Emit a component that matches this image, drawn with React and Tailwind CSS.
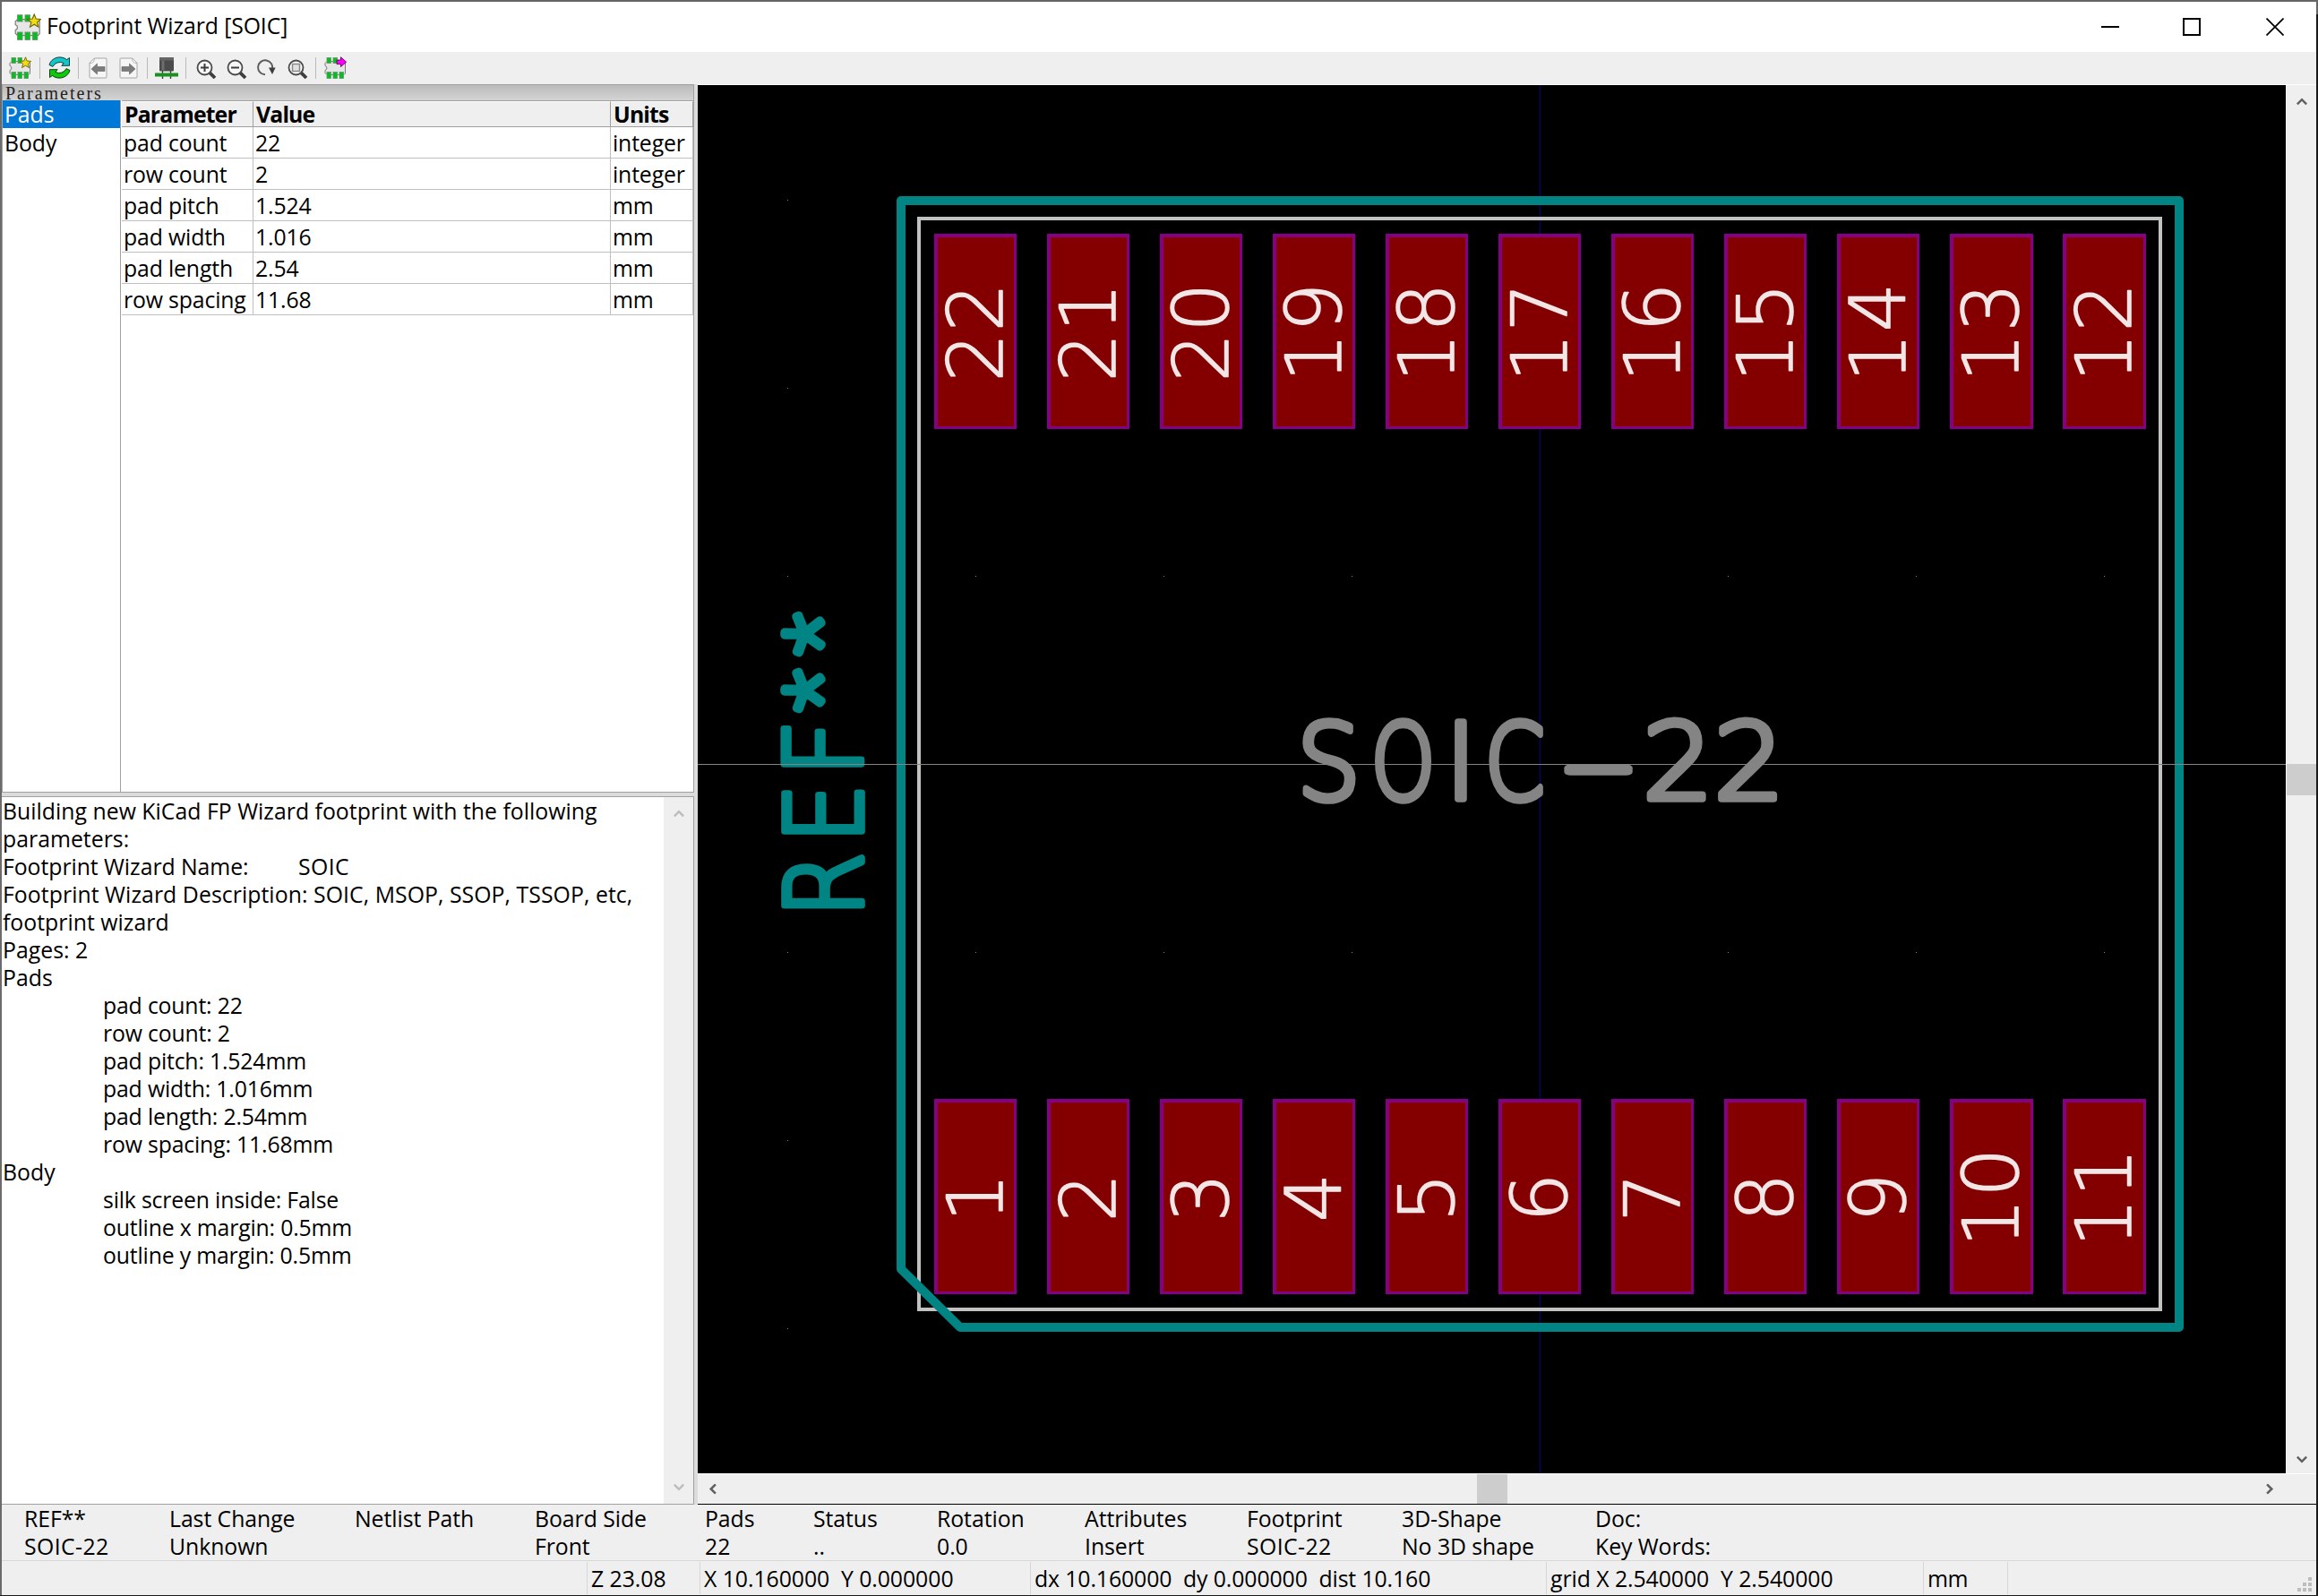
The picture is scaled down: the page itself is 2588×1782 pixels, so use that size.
import React from "react";

const params = [
  ["pad count", "22", "integer"],
  ["row count", "2", "integer"],
  ["pad pitch", "1.524", "mm"],
  ["pad width", "1.016", "mm"],
  ["pad length", "2.54", "mm"],
  ["row spacing", "11.68", "mm"],
];

const messages = [
  ["Building new KiCad FP Wizard footprint with the following", "plain"],
  ["parameters:", "plain"],
  ["Footprint Wizard Name:", "name"],
  ["Footprint Wizard Description: SOIC, MSOP, SSOP, TSSOP, etc,", "caps"],
  ["footprint wizard", "plain"],
  ["Pages: 2", "plain"],
  ["Pads", "plain"],
  ["pad count: 22", "indent"],
  ["row count: 2", "indent"],
  ["pad pitch: 1.524mm", "indent"],
  ["pad width: 1.016mm", "indent"],
  ["pad length: 2.54mm", "indent"],
  ["row spacing: 11.68mm", "indent"],
  ["Body", "plain"],
  ["silk screen inside: False", "indent"],
  ["outline x margin: 0.5mm", "indent"],
  ["outline y margin: 0.5mm", "indent"],
];

const messageStyles = {
  plain: "h-[31px] leading-[31px] whitespace-pre tracking-[0.02px]",
  caps: "h-[31px] leading-[31px] whitespace-pre tracking-[0.06px]",
  indent: "h-[31px] pl-28 leading-[31px] whitespace-pre tracking-[-0.17px]",
};

function FootprintBase() {
  return (
    <>
      <path d="M1 7.5 L3 5.5 H22 L23.5 7 V19 L22 20.5 H3 L1 18.5 V15.5 A2.6 2.6 0 0 0 1 10.5 Z" fill="#e6e6e6" stroke="#7d7d7d" strokeWidth="1" />
      {[3, 10, 17].map((x) => (
        <rect key={x} x={x} y="17.5" width="4.5" height="7" fill="#00c21c" stroke="#6f8f70" strokeWidth="0.8" />
      ))}
      {[3, 10].map((x) => (
        <rect key={x} x={x} y="1.5" width="4.5" height="6" fill="#00c21c" stroke="#6f8f70" strokeWidth="0.8" />
      ))}
    </>
  );
}

function WizardIcon({ className }) {
  return (
    <svg viewBox="0 0 25 25" className={className}>
      <FootprintBase />
      <path d="M18.5 0.8 L20.2 5 L24.6 5.4 L21.3 8.3 L22.4 12.6 L18.5 10.2 L14.6 12.6 L15.7 8.3 L12.4 5.4 L16.8 5 Z" fill="#f0dc10" stroke="#6b6200" strokeWidth="0.9" />
    </svg>
  );
}

function ExportIcon() {
  return (
    <svg viewBox="0 0 25 25" className="size-[25px]">
      <FootprintBase />
      <path d="M14 4 H18.5 V0.8 L24.6 6.2 L18.5 11.6 V8.6 H14 Z" fill="#f0f" stroke="#5b005b" strokeWidth="0.9" />
    </svg>
  );
}

function RefreshIcon() {
  return (
    <svg viewBox="0 0 25 25" className="size-[25px]">
      <path d="M1 9.5 A12 11 0 0 1 20.6 3.6 L23.5 1.5 V10.3 H14.8 L17.2 7.6 A8.5 8 0 0 0 5 11.4 Z" fill="#10c8c8" stroke="#173b3a" strokeWidth="1" />
      <path d="M24 15.5 A12 11 0 0 1 4.4 21.4 L1.5 23.5 V14.7 H10.2 L7.8 17.4 A8.5 8 0 0 0 20 13.6 Z" fill="#0ccb0c" stroke="#173b17" strokeWidth="1" />
    </svg>
  );
}

function PageArrow({ flip }) {
  return (
    <svg viewBox="0 0 21 24" className={flip ? "h-6 w-[21px] -scale-x-100" : "h-6 w-[21px]"}>
      <path d="M6.5 1 H19 Q20 1 20 2 V22 Q20 23 19 23 H2 Q1 23 1 22 V6.5 Z" fill="#f6f6f6" stroke="#a6a6a6" />
      <path d="M1 6.5 Q6.5 7 6.5 1 Z" fill="#fff" stroke="#a6a6a6" strokeWidth="0.8" />
      <path d="M3 13 L9.5 7 V10.5 H18 V15.5 H9.5 V19 Z" fill="#7c7c7c" stroke="#626262" strokeWidth="0.6" />
    </svg>
  );
}

function ChipIcon() {
  return (
    <svg viewBox="0 0 26 26" className="size-[26px]">
      <path d="M8.5 16 V25 M17.5 16 V25" stroke="#3c3c3c" strokeWidth="1.4" />
      <rect x="5" y="1" width="16" height="15.5" rx="1" fill="#4b4b4b" />
      <rect x="5" y="1" width="16" height="3.5" rx="1" fill="#656565" />
      <rect x="7.5" y="4.5" width="3" height="11" fill="#6d6d6d" />
      <rect x="0" y="18.5" width="26" height="4" fill="#1c8f22" />
    </svg>
  );
}

function Magnifier({ children }) {
  return (
    <svg viewBox="0 0 23 23" className="size-[23px]">
      <circle cx="9.5" cy="9.5" r="8" fill="#f8f8f8" stroke="#4a4a4a" strokeWidth="1.8" />
      <path d="M15.3 15.3 L21 21" stroke="#3d3d3d" strokeWidth="3.8" />
      {children}
    </svg>
  );
}

function ToolSeparator() {
  return <div className="h-6 w-px bg-[#b9b9b9]" />;
}

function Toolbar() {
  return (
    <div className="flex h-9 items-center bg-[#efefef] pb-px pl-2">
      <WizardIcon className="size-[25px]" />
      <div className="w-[9px]" />
      <ToolSeparator />
      <div className="w-[9px]" />
      <RefreshIcon />
      <div className="w-2" />
      <ToolSeparator />
      <div className="w-[11px]" />
      <PageArrow />
      <div className="w-[13px]" />
      <PageArrow flip />
      <div className="w-[10px]" />
      <ToolSeparator />
      <div className="w-2" />
      <ChipIcon />
      <div className="w-2" />
      <ToolSeparator />
      <div className="w-[11px]" />
      <div className="flex gap-[11px] pt-[3px]">
        <Magnifier>
          <path d="M5 9.5 H14 M9.5 5 V14" stroke="#3d3d3d" strokeWidth="2" />
        </Magnifier>
        <Magnifier>
          <path d="M5 9.5 H14" stroke="#3d3d3d" strokeWidth="2" />
        </Magnifier>
        <svg viewBox="0 0 23 23" className="size-[23px]">
          <path d="M9 17.3 A8 8 0 1 1 16.8 11.5" fill="none" stroke="#5b5b5b" strokeWidth="1.9" />
          <path d="M13 9.5 H20.6 L17 17 Z" fill="#3d3d3d" />
        </svg>
        <Magnifier>
          <rect x="5.5" y="5.5" width="8" height="8" fill="#e2e2e2" stroke="#8a8a8a" strokeWidth="1.5" />
        </Magnifier>
      </div>
      <div className="w-2" />
      <ToolSeparator />
      <div className="w-[9px]" />
      <ExportIcon />
    </div>
  );
}

function TitleBar() {
  return (
    <div className="flex h-14 items-center bg-white pl-[14px]">
      <WizardIcon className="size-[30px]" />
      <span className="ml-[6px] flex-1 pb-[3px] tracking-[-0.1px]">Footprint Wizard [SOIC]</span>
      <div className="flex items-center pr-9 pb-px">
        <div className="h-0.5 w-5 bg-black" />
        <div className="ml-[71px] size-5 border-2 border-black" />
        <svg viewBox="0 0 20 20" className="ml-[73px] size-5">
          <path d="M0.5 0.5 L19.5 19.5 M19.5 0.5 L0.5 19.5" stroke="#000" strokeWidth="1.7" />
        </svg>
      </div>
    </div>
  );
}

function Chevron({ className, color }) {
  return (
    <svg viewBox="0 0 12 9" className={className}>
      <path d="M0.8 7.4 L6 2.2 L11.2 7.4" fill="none" stroke={color} strokeWidth="2.5" />
    </svg>
  );
}

function ParameterPanel() {
  return (
    <div className="flex h-[791px] flex-col border border-[#a0a0a0] bg-white">
      <div className="h-[17px] bg-linear-to-b from-[#bababa] to-[#d4d4d4] pl-[3px] font-['Liberation_Serif',serif] text-[20px] leading-[18px] tracking-[2px] text-[#222]">
        Parameters
      </div>
      <div className="flex flex-1">
        <div className="w-[131px] shrink-0">
          <div className="h-[31px] bg-[#0078d7] pl-[2px] leading-[30px] text-white">Pads</div>
          <div className="h-[31px] pl-[2px] leading-[32px]">Body</div>
        </div>
        <div className="w-px bg-[#a0a0a0]" />
        <div className="ml-px flex-1">
          <div className="grid h-[30px] grid-cols-[147px_399px_1fr] border-t border-b border-[#a0a0a0] bg-[#efefef] leading-[26px] font-bold tracking-[-0.85px]">
            <div className="border-t border-r border-t-white border-r-[#a0a0a0] pl-[3px]">Parameter</div>
            <div className="border-t border-r border-t-white border-r-[#a0a0a0] pl-[3px]">Value</div>
            <div className="border-t border-r border-t-white border-r-[#a0a0a0] pl-[3px]">Units</div>
          </div>
          {params.map((row) => (
            <div key={row[0]} className="grid h-[35px] grid-cols-[147px_399px_1fr] border-b border-[#c0c0c0] leading-[34px] tracking-[-0.15px]">
              {row.map((cell, i) => (
                <div key={i} className="h-[34px] border-r border-[#c0c0c0] pl-[2px]">{cell}</div>
              ))}
            </div>
          ))}
        </div>
      </div>
    </div>
  );
}

function MessagePanel() {
  return (
    <div className="mt-1 flex flex-1 border border-l-0 border-[#a0a0a0] bg-white">
      <div className="flex-1 pl-px">
        {messages.map(([text, kind]) =>
          kind === "name" ? (
            <div key={text} className="flex h-[31px] leading-[31px]">
              <span className="w-[330px]">{text}</span>
              <span className="tracking-[0.4px]">SOIC</span>
            </div>
          ) : (
            <div key={text} className={messageStyles[kind]}>{text}</div>
          )
        )}
      </div>
      <div className="flex w-[33px] flex-col items-center justify-between bg-[#efefef] py-3.5">
        <Chevron className="h-[9px] w-3" color="#bdbdbd" />
        <Chevron className="h-[9px] w-3 rotate-180" color="#bdbdbd" />
      </div>
    </div>
  );
}

const dotColumns = [879, 1089, 1299, 1509, 1929, 2139, 2349];
const dotRows = [223, 433, 643, 1063, 1273, 1483];
const pads = Array.from({ length: 11 }, (_, i) => i);

function Pad({ index, y, label, cy }) {
  const x = 1043 + index * 126;
  const w = index > 8 ? 93 : 92;
  return (
    <g>
      <rect x={x} y={y} width={w} height="218" fill="#840084" />
      <rect x={x + 4} y={y + 4} width={w - 7} height="211" fill="#840000" />
      <text
        transform={`translate(${x + 75.6} ${cy}) rotate(-90)`}
        textAnchor="middle"
        fontFamily="'DejaVu Sans Light', 'DejaVu Sans', sans-serif"
        fontWeight="200"
        fontSize="86"
        letterSpacing="1.3"
        fill="#f2e6e6"
        stroke="#f2e6e6"
        strokeWidth="1.5"
        strokeLinejoin="round"
      >
        {label}
      </text>
    </g>
  );
}

const fit = { lengthAdjust: "spacingAndGlyphs" };

function FootprintCanvas() {
  return (
    <svg viewBox="779 95 1773 1550" className="block h-[1550px] w-[1773px] bg-black">
      {dotRows.map((y) => dotColumns.map((x) => <rect key={`${x}-${y}`} x={x} y={y} width="1" height="1" fill="#848484" />))}
      <rect x="1719" y="95" width="1" height="1550" fill="#000084" />
      <rect x="1026" y="244" width="1386" height="1218" fill="none" stroke="#c2c2c2" strokeWidth="4" />
      <path d="M1006 224 H2433 V1482 H1072 L1006 1417 Z" fill="none" stroke="#008484" strokeWidth="10" strokeLinejoin="round" />
      {pads.map((i) => (
        <Pad key={`t${i}`} index={i} y={261} label={String(22 - i)} cy={370.5} />
      ))}
      {pads.map((i) => (
        <Pad key={`b${i}`} index={i} y={1227} label={String(i + 1)} cy={1336.5} />
      ))}
      <text
        y="892.2"
        fontFamily="'DejaVu Sans Light', 'DejaVu Sans', sans-serif"
        fontWeight="200"
        fontSize="118.5"
        fill="#848484"
        stroke="#848484"
        strokeWidth="7.6"
        strokeLinejoin="round"
      >
        <tspan x="1448" textLength="71" {...fit}>S</tspan>
        <tspan x="1530.5" textLength="72" {...fit}>O</tspan>
        <tspan x="1613.6" textLength="35" {...fit}>I</tspan>
        <tspan x="1657.5" textLength="67.4" {...fit}>C</tspan>
        <tspan x="1742.5" textLength="84" {...fit}>-</tspan>
        <tspan x="1834" textLength="79" {...fit}>2</tspan>
        <tspan x="1913.5" textLength="79" {...fit}>2</tspan>
      </text>
      <text
        transform="translate(962.2 1020) rotate(-90)"
        fontFamily="'DejaVu Sans Light', 'DejaVu Sans', sans-serif"
        fontWeight="200"
        fontSize="118.5"
        fill="#008484"
        stroke="#008484"
        strokeWidth="7.6"
        strokeLinejoin="round"
      >
        <tspan x="-4" textLength="72" {...fit}>R</tspan>
        <tspan x="79" textLength="65.5" {...fit}>E</tspan>
        <tspan x="153.6" textLength="62" {...fit}>F</tspan>
        <tspan x="227" y="-11" fontFamily="Roboto" fontWeight="100" fontSize="105" strokeWidth="9.5">*</tspan>
        <tspan x="290" y="-11" fontFamily="Roboto" fontWeight="100" fontSize="105" strokeWidth="9.5">*</tspan>
      </text>
      <rect x="779" y="853" width="1773" height="1" fill="#848484" />
    </svg>
  );
}

function CanvasPanel() {
  return (
    <div className="flex flex-1 flex-col border-t border-t-white border-b border-b-black bg-[#efefef]">
      <div className="flex">
        <FootprintCanvas />
        <div className="flex w-[34px] flex-col items-center border-l border-[#f8f8f8] bg-[#efefef] pt-[14px] pb-[11px]">
          <Chevron className="h-[9px] w-3" color="#606060" />
          <div className="mt-[735px] h-[35px] w-[33px] bg-[#cdcdcd]" />
          <Chevron className="mt-auto h-[9px] w-3 rotate-180" color="#606060" />
        </div>
      </div>
      <div className="flex h-[34px] items-center border-t border-white pr-[46px] pl-[11px]">
        <Chevron className="h-[9px] w-3 -rotate-90" color="#606060" />
        <div className="ml-[847px] h-[33px] w-[34px] bg-[#cdcdcd]" />
        <Chevron className="ml-auto h-[9px] w-3 rotate-90" color="#606060" />
      </div>
    </div>
  );
}

function Info({ label, value, className }) {
  return (
    <div className={className}>
      <div className="h-[31px] whitespace-pre">{label}</div>
      <div className={value === "SOIC-22" ? "h-[31px] tracking-[0.4px] whitespace-pre" : "h-[31px] whitespace-pre"}>{value}</div>
    </div>
  );
}

function InfoBar() {
  return (
    <div className="flex h-[63px] border-b border-[#d7d7d7] bg-[#efefef] pl-[25px] leading-[30px]">
      <Info label="REF**" value="SOIC-22" className="w-[162px]" />
      <Info label="Last Change" value="Unknown" className="w-[207px]" />
      <Info label="Netlist Path" value="" className="w-[201px]" />
      <Info label="Board Side" value="Front" className="w-[190px]" />
      <Info label="Pads" value="22" className="w-[121px]" />
      <Info label="Status" value=".." className="w-[138px]" />
      <Info label="Rotation" value="0.0" className="w-[165px]" />
      <Info label="Attributes" value="Insert" className="w-[181px]" />
      <Info label="Footprint" value="SOIC-22" className="w-[173px]" />
      <Info label="3D-Shape" value="No 3D shape" className="w-[216px]" />
      <Info label="Doc:" value="Key Words:" className="w-[200px]" />
    </div>
  );
}

function StatusBar() {
  return (
    <div className="flex h-[38px] items-stretch bg-[#efefef] pt-px pb-px leading-[37px] whitespace-pre">
      <div className="w-[654px] border-r border-[#d7d7d7]" />
      <div className="w-[126px] border-r border-[#d7d7d7] pl-[4px]">Z 23.08</div>
      <div className="w-[369px] border-r border-[#d7d7d7] pl-[4px]">X 10.160000  Y 0.000000</div>
      <div className="w-[576px] border-r border-[#d7d7d7] pl-[4px] tracking-[-0.1px]">dx 10.160000  dy 0.000000  dist 10.160</div>
      <div className="w-[421px] border-r border-[#d7d7d7] pl-[4px]">grid X 2.540000  Y 2.540000</div>
      <div className="w-[94px] border-r border-[#d7d7d7] pl-[4px] tracking-[-0.4px]">mm</div>
      <div className="flex flex-1 items-end justify-end pr-1 pb-0.5">
        <svg viewBox="0 0 17 17" className="size-[17px]">
          {[[12, 0], [6, 6], [12, 6], [0, 12], [6, 12], [12, 12]].map(([x, y]) => (
            <rect key={`${x}-${y}`} x={x} y={y} width="4" height="4" fill="#bdbdbd" />
          ))}
        </svg>
      </div>
    </div>
  );
}

export default function App() {
  return (
    <div className="flex h-[1782px] w-[2588px] flex-col overflow-hidden border-t-2 border-b border-t-[#666] border-b-[#1a1a1a] bg-[#efefef] font-['Open_Sans',sans-serif] text-[24.8px] tracking-[-0.05px] text-black">
      <div className="flex flex-1">
        <div className="w-0.5 bg-[#6b6b6b]" />
        <div className="flex flex-1 flex-col">
          <TitleBar />
          <Toolbar />
          <div className="flex h-[1586px]">
            <div className="flex w-[773px] flex-col bg-[#dcdcdc]">
              <ParameterPanel />
              <MessagePanel />
            </div>
            <div className="w-1 bg-[#dcdcdc]" />
            <CanvasPanel />
          </div>
          <InfoBar />
          <StatusBar />
        </div>
        <div className="flex w-0.5 flex-col">
          <div className="h-3.5 bg-[#666]" />
          <div className="flex-1 bg-[#1a1a1a]" />
        </div>
      </div>
    </div>
  );
}
